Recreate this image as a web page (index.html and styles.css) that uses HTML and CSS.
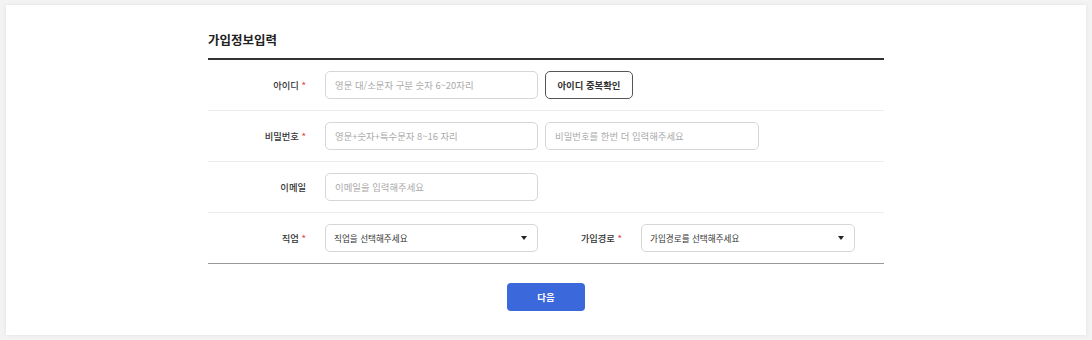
FILE: index.html
```html
<!DOCTYPE html>
<html lang="ko">
<head>
<meta charset="utf-8">
<link rel="stylesheet" href="styles.css">
</head>
<body>
<div class="card">
  <div class="form">
    <h2 class="title">가입정보입력</h2>
    <div class="table">
      <div class="row">
        <div class="label">아이디 <span class="req">*</span></div>
        <div class="field"><input class="input" type="text" placeholder="영문 대/소문자 구분 숫자 6~20자리"></div>
        <button class="btn-check" type="button">아이디 중복확인</button>
      </div>
      <div class="row">
        <div class="label">비밀번호 <span class="req">*</span></div>
        <div class="field"><input class="input" type="password" placeholder="영문+숫자+특수문자 8~16 자리"></div>
        <div class="field wide"><input class="input" type="password" placeholder="비밀번호를 한번 더 입력해주세요"></div>
      </div>
      <div class="row">
        <div class="label">이메일</div>
        <div class="field"><input class="input" type="text" placeholder="이메일을 입력해주세요"></div>
      </div>
      <div class="row last">
        <div class="label">직업 <span class="req">*</span></div>
        <div class="select"><span>직업을 선택해주세요</span><span class="arrow"></span></div>
        <div class="label label2">가입경로 <span class="req">*</span></div>
        <div class="select wide"><span>가입경로를 선택해주세요</span><span class="arrow"></span></div>
      </div>
    </div>
    <div class="actions">
      <button class="btn-next" type="button">다음</button>
    </div>
  </div>
</div>
</body>
</html>
```
FILE: styles.css
```css
* { box-sizing: border-box; }
html, body { margin: 0; padding: 0; }
body {
  background: #f3f3f3;
  padding: 5px 6px;
  font-family: "Noto Sans CJK KR", "Noto Sans", sans-serif;
  color: #333;
  height: 340px;
}
.card {
  background: #fff;
  height: 330px;
  box-shadow: 0 0 4px rgba(0,0,0,0.08);
  display: flex;
  justify-content: center;
}
.form {
  width: 676px;
  padding-top: 26px;
}
.title {
  margin: 0;
  font-size: 12.5px;
  font-weight: 700;
  color: #222;
  line-height: 18px;
  padding-bottom: 9px;
  border-bottom: 2px solid #333;
}
.table {
  border-bottom: 1px solid #999;
}
.row {
  display: flex;
  align-items: center;
  height: 51px;
  border-bottom: 1px solid #ececec;
  gap: 7px;
}
.row.last { border-bottom: none; height: 50px; }
.label {
  width: 110px;
  text-align: right;
  padding-right: 12px;
  font-size: 9.3px;
  font-weight: 500;
  color: #333;
  flex-shrink: 0;
}
.label2 { width: 78px; padding-right: 1px; margin-right: 11px; }
.req { color: #e5484d; }
.field { width: 213px; }
.field.wide { width: 214px; }
.input {
  display: block;
  width: 100%;
  height: 28px;
  border: 1px solid #d6d6d6;
  border-radius: 5px;
  padding: 0 9px;
  font-family: inherit;
  font-size: 9.4px;
  color: #333;
  outline: none;
}
.input::placeholder { color: #aaa; }
.btn-check {
  width: 88px;
  height: 28px;
  border: 1px solid #555;
  border-radius: 5px;
  background: #fff;
  font-family: inherit;
  font-size: 9.4px;
  font-weight: 700;
  color: #333;
  padding: 0;
}
.select {
  width: 213px;
  height: 28px;
  border: 1px solid #d6d6d6;
  border-radius: 5px;
  padding: 0 10px 0 8px;
  display: flex;
  align-items: center;
  justify-content: space-between;
  font-size: 8.6px;
  color: #333;
}
.select.wide { width: 214px; }
.arrow {
  width: 0;
  height: 0;
  border-left: 3px solid transparent;
  border-right: 3px solid transparent;
  border-top: 4px solid #222;
}
.actions {
  display: flex;
  justify-content: center;
  padding-top: 19px;
}
.btn-next {
  width: 78px;
  height: 28px;
  border: none;
  border-radius: 4px;
  background: #3b68db;
  color: #fff;
  font-family: inherit;
  font-size: 9.4px;
  font-weight: 700;
  padding: 0;
}
```
